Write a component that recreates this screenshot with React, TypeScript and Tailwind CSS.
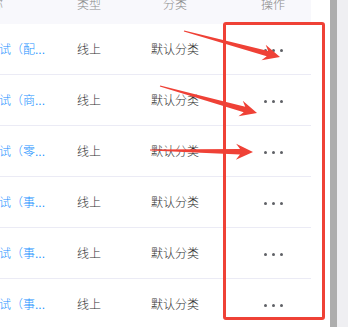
const rows = ["测试（配...", "测试（商...", "测试（零...", "测试（事...", "测试（事...", "测试（事..."];

const arrows: [number, number, number, number][] = [
  [184, 31, 280, 57],
  [160, 86, 257, 113],
  [150, 150, 253, 152],
];

function arrowPoints(tx: number, ty: number, px: number, py: number) {
  const dx = px - tx;
  const dy = py - ty;
  const len = Math.hypot(dx, dy);
  const ux = dx / len;
  const uy = dy / len;
  const nx = -uy;
  const ny = ux;
  const head = 17;
  const half = 8;
  const notch = 4;
  const bx = px - ux * head;
  const by = py - uy * head;
  const sx = px - ux * (head - notch);
  const sy = py - uy * (head - notch);
  const pts = [
    [tx + nx * 0.6, ty + ny * 0.6],
    [sx + nx * 2.8, sy + ny * 2.8],
    [bx + nx * half, by + ny * half],
    [px, py],
    [bx - nx * half, by - ny * half],
    [sx - nx * 2.8, sy - ny * 2.8],
    [tx - nx * 0.6, ty - ny * 0.6],
  ];
  return pts.map((p) => p.join(",")).join(" ");
}

function Dots() {
  return (
    <div className="flex items-center gap-[5px]">
      <span className="w-[3px] h-[3px] rounded-full bg-[#5f6166]" />
      <span className="w-[3px] h-[3px] rounded-full bg-[#5f6166]" />
      <span className="w-[3px] h-[3px] rounded-full bg-[#5f6166]" />
    </div>
  );
}

export default function App() {
  return (
    <div
      className="relative flex w-[348px] h-[327px] overflow-hidden bg-white text-[12px] font-light"
      style={{ fontFamily: '"Liberation Sans", "Noto Sans CJK SC", sans-serif' }}
    >
      <div className="w-[330px] bg-white overflow-hidden">
        <div className="w-[311px]">
          <div className="grid grid-cols-[77px_74px_84px_76px] h-[38px] -mt-[14px] items-center bg-[#f8f8fc] text-[#8c8c8c]">
            <div className="-ml-[21px] whitespace-nowrap">名称</div>
            <div>类型</div>
            <div className="pl-[12px]">分类</div>
            <div className="text-center">操作</div>
          </div>
          {rows.map((name, i) => (
            <div
              key={i}
              className="grid grid-cols-[77px_74px_84px_76px] h-[51px] items-center border-b border-[#ebebf5] text-[#333] pt-[2px]"
            >
              <div className="-ml-[13px] whitespace-nowrap text-[#1890ff]">{name}</div>
              <div>线上</div>
              <div>默认分类</div>
              <div className="flex justify-center">
                <Dots />
              </div>
            </div>
          ))}
        </div>
      </div>
      <div className="w-[7px] bg-[#adadad]" />
      <div className="flex-1 bg-[#efeff2]" />

      <div className="absolute left-[223px] top-[22px] w-[102px] h-[298px] border-[3px] border-[#ef4136] rounded-[3px]" />
      <svg className="absolute left-0 top-0" width="348" height="327">
        {arrows.map((a, i) => (
          <polygon key={i} points={arrowPoints(a[0], a[1], a[2], a[3])} fill="#ef4136" />
        ))}
      </svg>
    </div>
  );
}
